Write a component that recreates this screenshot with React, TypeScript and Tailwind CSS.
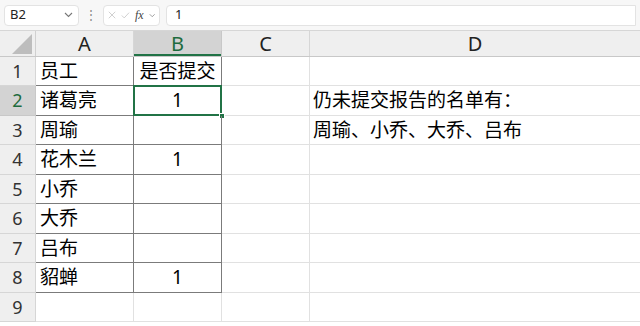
import React from 'react';

const FONT = { fontFamily: '"Noto Sans", "Noto Sans CJK SC", sans-serif' };

const rowHeights = [29, 30, 29, 30, 29, 30, 29, 30, 29];

const rows: { a: string; b: string; d: string }[] = [
  { a: '员工', b: '是否提交', d: '' },
  { a: '诸葛亮', b: '1', d: '仍未提交报告的名单有：' },
  { a: '周瑜', b: '', d: '周瑜、小乔、大乔、吕布' },
  { a: '花木兰', b: '1', d: '' },
  { a: '小乔', b: '', d: '' },
  { a: '大乔', b: '', d: '' },
  { a: '吕布', b: '', d: '' },
  { a: '貂蝉', b: '1', d: '' },
  { a: '', b: '', d: '' },
];

const FormulaBar = () => (
  <div className="h-[31px] bg-[#f7f7f7] border-b border-[#d6d6d6] flex items-center px-[4px] gap-[6px]">
    <div className="w-[75px] h-[21px] bg-white border border-[#e3e3e3] rounded-[4px] flex items-center justify-between px-[5px]">
      <span className="text-[13px] text-[#222]">B2</span>
      <svg width="9" height="6" viewBox="0 0 9 6" className="text-[#777]">
        <path d="M1 1l3.5 3.5L8 1" fill="none" stroke="currentColor" strokeWidth="1.1" />
      </svg>
    </div>
    <span className="text-[#888] text-[12px] leading-none">⋮</span>
    <div className="w-[57px] h-[21px] bg-white border border-[#e3e3e3] rounded-[4px] flex items-center gap-[5px] px-[4px]">
      <svg width="10" height="10" viewBox="0 0 10 10">
        <path d="M1 1l8 8M9 1l-8 8" stroke="#c4c4c4" strokeWidth="1" />
      </svg>
      <svg width="11" height="9" viewBox="0 0 11 9">
        <path d="M1 4.5l3 3L10 1" fill="none" stroke="#c4c4c4" strokeWidth="1" />
      </svg>
      <span className="text-[12px] italic text-[#444] leading-none" style={{ fontFamily: '"Liberation Serif", serif' }}>
        fx
      </span>
      <svg width="8" height="5" viewBox="0 0 8 5">
        <path d="M1 1l3 3 3-3" fill="none" stroke="#888" strokeWidth="1" />
      </svg>
    </div>
    <div className="flex-1 h-[21px] bg-white border border-[#e3e3e3] rounded-l-[4px] flex items-center px-[8px] text-[13px] text-[#222]">
      1
    </div>
  </div>
);

const ColumnHeader = () => (
  <div className="flex h-[26px] bg-[#efefef] border-b border-[#c8c8c8] text-[20px] text-[#222]">
    <div className="w-[36px] shrink-0 border-r border-[#d0d0d0] relative">
      <svg width="20" height="20" viewBox="0 0 20 20" className="absolute right-[3px] bottom-[2px]">
        <path d="M20 0L20 20L0 20Z" fill="#bdbdbd" />
      </svg>
    </div>
    <div className="w-[98px] shrink-0 border-r border-[#d6d6d6] flex items-center justify-center">A</div>
    <div className="w-[88px] shrink-0 border-r border-[#c8c8c8] bg-[#d3d3d3] text-[#1e6b3e] flex items-center justify-center shadow-[inset_0_-2px_0_#217346]">
      B
    </div>
    <div className="w-[88px] shrink-0 border-r border-[#d6d6d6] flex items-center justify-center">C</div>
    <div className="flex-1 flex items-center justify-center">D</div>
  </div>
);

export default function App() {
  return (
    <div className="w-[640px] h-[326px] overflow-hidden bg-white" style={FONT}>
      <FormulaBar />
      <ColumnHeader />
      {rows.map((r, i) => {
        const inTable = i < 8;
        const selected = i === 1;
        const line = inTable ? 'border-[#7b7b7b]' : 'border-[#e1e1e1]';
        return (
          <div key={i} className="flex text-[19px] text-black" style={{ height: rowHeights[i] }}>
            <div
              className={`w-[36px] shrink-0 border-b border-r flex items-center justify-center text-[18px] ${
                selected ? 'bg-[#d3d3d3] text-[#1e6b3e] border-[#c8c8c8]' : 'bg-[#efefef] text-[#333] border-[#d6d6d6]'
              }`}
            >
              {i + 1}
            </div>
            <div className={`w-[98px] shrink-0 border-b border-r ${line} flex items-center pl-[4px]`}>{r.a}</div>
            <div className={`w-[88px] shrink-0 border-b border-r ${line} flex items-center justify-center relative`}>
              {r.b}
              {selected && (
                <>
                  <div className="absolute -left-[1px] -top-[1px] -right-[1px] -bottom-[1px] border-2 border-[#217346]" />
                  <div className="absolute -right-[4px] -bottom-[4px] w-[6px] h-[6px] bg-[#217346] border border-white" />
                </>
              )}
            </div>
            <div className="w-[88px] shrink-0 border-b border-r border-[#e1e1e1]" />
            <div className="flex-1 border-b border-[#e1e1e1] flex items-center pl-[3px]">{r.d}</div>
          </div>
        );
      })}
    </div>
  );
}
